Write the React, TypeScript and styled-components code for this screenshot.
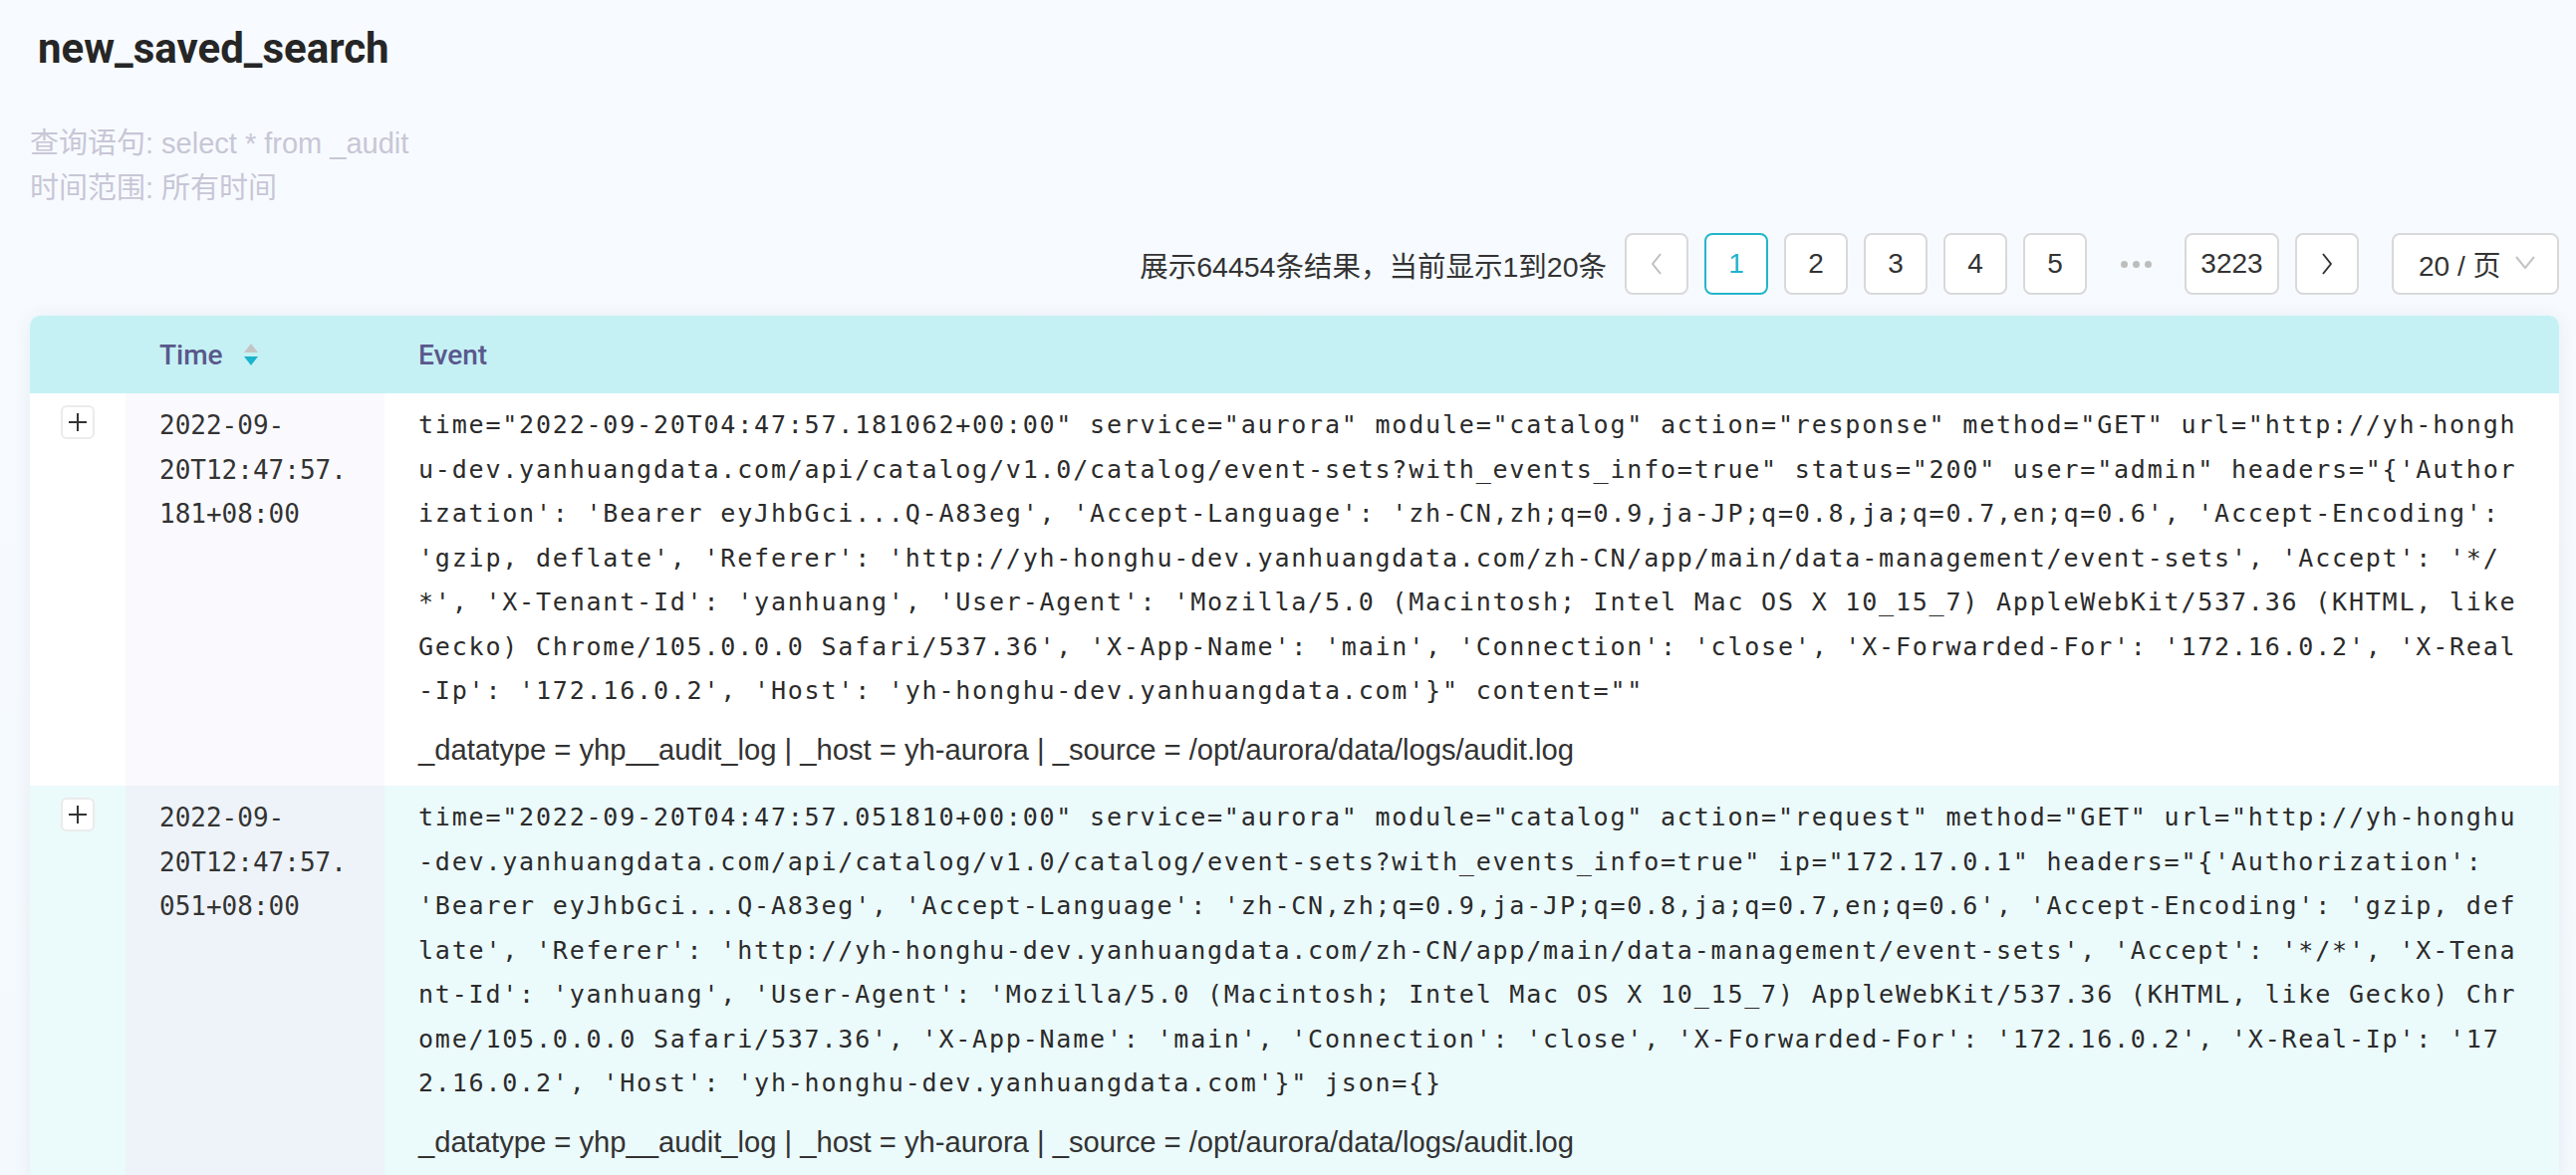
import React from "react";
import styled, { createGlobalStyle } from "styled-components";

const GlobalStyle = createGlobalStyle`
  html, body {
    margin: 0;
    padding: 0;
    background: #f6fafe;
  }
  body {
    font-family: "Liberation Sans", "Noto Sans CJK SC", sans-serif;
    color: #333;
  }
  * {
    box-sizing: border-box;
  }
`;

const Page = styled.div`
  min-height: 1180px;
  padding: 22px 17px 0 30px;
  background: linear-gradient(180deg, #f7fbff 0%, #f4f9fd 100%);
`;

const Title = styled.h1`
  margin: 0 0 0 8px;
  font-family: Roboto, "Liberation Sans", sans-serif;
  font-weight: 700;
  font-size: 42px;
  line-height: 54px;
  color: #262626;
`;

const QueryInfo = styled.div`
  margin-top: 46px;
  font-size: 29px;
  line-height: 45px;
  color: #c8c6d6;
`;

const Pager = styled.div`
  margin-top: 22px;
  display: flex;
  justify-content: flex-end;
  align-items: center;
  gap: 16px;
`;

const Summary = styled.span`
  margin-right: 2px;
  font-size: 28.5px;
  color: #333;
`;

const PageButton = styled.div<{ $active?: boolean; $wide?: boolean }>`
  width: ${(p) => (p.$wide ? "95px" : "64px")};
  height: 62px;
  display: flex;
  align-items: center;
  justify-content: center;
  background: #fff;
  border: 2px solid ${(p) => (p.$active ? "#22b6cb" : "#d9d9d9")};
  border-radius: 8px;
  font-size: 28px;
  color: ${(p) => (p.$active ? "#1fb3ca" : "#333")};
`;

const Ellipsis = styled.div`
  width: 66px;
  display: flex;
  justify-content: center;
  gap: 5px;

  span {
    width: 7px;
    height: 7px;
    border-radius: 50%;
    background: #bdbdbd;
  }
`;

const SizeSelect = styled.div`
  margin-left: 17px;
  width: 168px;
  height: 62px;
  display: flex;
  align-items: center;
  justify-content: space-between;
  padding: 0 20px 0 25px;
  background: #fff;
  border: 2px solid #d9d9d9;
  border-radius: 8px;
  font-size: 28px;
  color: #333;
`;

const Table = styled.div`
  margin-top: 21px;
  background: #fff;
  border-radius: 10px 10px 0 0;
  box-shadow: 0 2px 18px rgba(40, 70, 110, 0.08);
  overflow: hidden;
`;

const HeaderRow = styled.div`
  display: grid;
  grid-template-columns: 96px 260px 1fr;
  height: 78px;
  align-items: center;
  background: #c5f1f4;
`;

const HeaderCell = styled.div`
  display: flex;
  align-items: center;
  gap: 20px;
  padding: 0 34px;
  font-family: Roboto, "Liberation Sans", sans-serif;
  font-weight: 500;
  font-size: 28px;
  color: #5a588c;
`;

const Row = styled.div<{ $active?: boolean }>`
  display: grid;
  grid-template-columns: 96px 260px 1fr;
  background: ${(p) => (p.$active ? "#ebfafb" : "#fff")};
`;

const ExpandCell = styled.div`
  display: flex;
  justify-content: center;
  padding-top: 12px;
`;

const ExpandButton = styled.div`
  width: 34px;
  height: 34px;
  display: flex;
  align-items: center;
  justify-content: center;
  background: #fff;
  border: 2px solid #ebebeb;
  border-radius: 6px;
`;

const TimeCell = styled.div<{ $active?: boolean }>`
  padding: 10px 34px;
  background: ${(p) => (p.$active ? "#eef3f9" : "#fafafe")};
  font-family: "DejaVu Sans Mono", monospace;
  font-size: 26px;
  line-height: 44.5px;
  color: #333;
  overflow-wrap: anywhere;
`;

const EventCell = styled.div`
  padding: 10px 34px 16px;
  min-width: 0;
`;

const EventText = styled.div`
  font-family: "DejaVu Sans Mono", monospace;
  font-size: 25px;
  letter-spacing: 1.8px;
  line-height: 44.5px;
  color: #2b2b2b;
  word-break: break-all;
`;

const Meta = styled.div`
  margin-top: 16.5px;
  font-size: 29.2px;
  line-height: 40px;
  color: #333;
`;

const Chevron = ({ dir, color }: { dir: "left" | "right" | "down"; color: string }) => {
  const points =
    dir === "left" ? "13,4 5,14 13,24" : dir === "right" ? "5,4 13,14 5,24" : "3,7 12,18 21,7";
  const w = dir === "down" ? 24 : 18;
  return (
    <svg width={w} height="28" viewBox={`0 0 ${w} 28`} fill="none">
      <polyline points={points} stroke={color} strokeWidth="2" strokeLinejoin="round" />
    </svg>
  );
};

const SortIcon = () => (
  <svg width="16" height="28" viewBox="0 0 16 28">
    <polygon points="8,3 15,12 1,12" fill="#c4c4c4" />
    <polygon points="1,16 15,16 8,25" fill="#1ab4cb" />
  </svg>
);

const PlusIcon = () => (
  <svg width="20" height="20" viewBox="0 0 20 20">
    <path d="M10 1v18M1 10h18" stroke="#333" strokeWidth="2" />
  </svg>
);

const headers = (extra: string) =>
  `'Authorization': 'Bearer eyJhbGci...Q-A83eg', 'Accept-Language': 'zh-CN,zh;q=0.9,ja-JP;q=0.8,ja;q=0.7,en;q=0.6', 'Accept-Encoding': 'gzip, deflate', 'Referer': 'http://yh-honghu-dev.yanhuangdata.com/zh-CN/app/main/data-management/event-sets', 'Accept': '*/*', 'X-Tenant-Id': 'yanhuang', 'User-Agent': 'Mozilla/5.0 (Macintosh; Intel Mac OS X 10_15_7) AppleWebKit/537.36 (KHTML, like Gecko) Chrome/105.0.0.0 Safari/537.36', 'X-App-Name': 'main', 'Connection': 'close', 'X-Forwarded-For': '172.16.0.2', 'X-Real-Ip': '172.16.0.2', 'Host': 'yh-honghu-dev.yanhuangdata.com'}" ${extra}`;

const events = [
  {
    time: "2022-09-20T12:47:57.181+08:00",
    text:
      `time="2022-09-20T04:47:57.181062+00:00" service="aurora" module="catalog" action="response" method="GET" url="http://yh-honghu-dev.yanhuangdata.com/api/catalog/v1.0/catalog/event-sets?with_events_info=true" status="200" user="admin" headers="{` +
      headers(`content=""`),
  },
  {
    time: "2022-09-20T12:47:57.051+08:00",
    text:
      `time="2022-09-20T04:47:57.051810+00:00" service="aurora" module="catalog" action="request" method="GET" url="http://yh-honghu-dev.yanhuangdata.com/api/catalog/v1.0/catalog/event-sets?with_events_info=true" ip="172.17.0.1" headers="{` +
      headers(`json={}`),
  },
];

const meta = "_datatype = yhp__audit_log | _host = yh-aurora | _source = /opt/aurora/data/logs/audit.log";

export default function App() {
  return (
    <>
      <GlobalStyle />
      <Page>
        <Title>new_saved_search</Title>
        <QueryInfo>
          <div>查询语句: select * from _audit</div>
          <div>时间范围: 所有时间</div>
        </QueryInfo>

        <Pager>
          <Summary>展示64454条结果，当前显示1到20条</Summary>
          <PageButton>
            <Chevron dir="left" color="#bdbdbd" />
          </PageButton>
          <PageButton $active>1</PageButton>
          <PageButton>2</PageButton>
          <PageButton>3</PageButton>
          <PageButton>4</PageButton>
          <PageButton>5</PageButton>
          <Ellipsis>
            <span />
            <span />
            <span />
          </Ellipsis>
          <PageButton $wide>3223</PageButton>
          <PageButton>
            <Chevron dir="right" color="#333" />
          </PageButton>
          <SizeSelect>
            <span>20 / 页</span>
            <Chevron dir="down" color="#c4c4c4" />
          </SizeSelect>
        </Pager>

        <Table>
          <HeaderRow>
            <div />
            <HeaderCell>
              Time <SortIcon />
            </HeaderCell>
            <HeaderCell>Event</HeaderCell>
          </HeaderRow>
          {events.map((ev, i) => (
            <Row key={i} $active={i === 1}>
              <ExpandCell>
                <ExpandButton>
                  <PlusIcon />
                </ExpandButton>
              </ExpandCell>
              <TimeCell $active={i === 1}>{ev.time}</TimeCell>
              <EventCell>
                <EventText>{ev.text}</EventText>
                <Meta>{meta}</Meta>
              </EventCell>
            </Row>
          ))}
        </Table>
      </Page>
    </>
  );
}
